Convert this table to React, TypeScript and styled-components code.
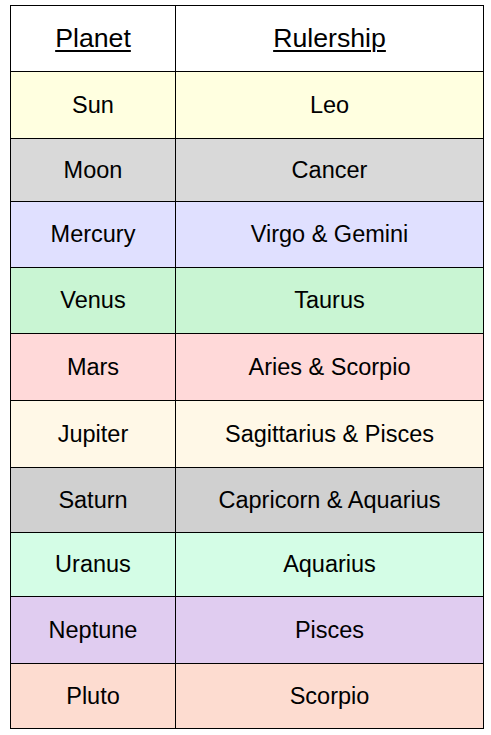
import React from "react";
import styled, { createGlobalStyle } from "styled-components";

const Global = createGlobalStyle`
  html, body { margin: 0; padding: 0; background: #ffffff; }
  body { font-family: "Liberation Sans", Arial, sans-serif; color: #000; }
`;

const Table = styled.div`
  margin: 5px 0 0 10px;
  width: 474px;
  border-top: 1px solid #000;
  border-left: 1px solid #000;
  box-sizing: border-box;
`;

const Row = styled.div<{ $bg: string; $h: number }>`
  display: grid;
  grid-template-columns: 165px 308px;
  height: ${(p) => p.$h}px;
  background: ${(p) => p.$bg};
`;

const Cell = styled.div<{ $head?: boolean }>`
  display: flex;
  align-items: center;
  justify-content: center;
  border-right: 1px solid #000;
  border-bottom: 1px solid #000;
  box-sizing: border-box;
  font-size: ${(p) => (p.$head ? 26.7 : 23.5)}px;
  text-decoration: ${(p) => (p.$head ? "underline" : "none")};
  text-underline-offset: 3px;
  text-decoration-thickness: 2px;
`;

const rows: { planet: string; rule: string; bg: string; h: number }[] = [
  { planet: "Sun", rule: "Leo", bg: "#ffffe0", h: 67 },
  { planet: "Moon", rule: "Cancer", bg: "#d9d9d9", h: 63 },
  { planet: "Mercury", rule: "Virgo & Gemini", bg: "#e0e0ff", h: 66 },
  { planet: "Venus", rule: "Taurus", bg: "#c9f5d3", h: 66 },
  { planet: "Mars", rule: "Aries & Scorpio", bg: "#ffd9d9", h: 67 },
  { planet: "Jupiter", rule: "Sagittarius & Pisces", bg: "#fff8e7", h: 67 },
  { planet: "Saturn", rule: "Capricorn & Aquarius", bg: "#d0d0d0", h: 65 },
  { planet: "Uranus", rule: "Aquarius", bg: "#d4fde6", h: 64 },
  { planet: "Neptune", rule: "Pisces", bg: "#e0ccf0", h: 67 },
  { planet: "Pluto", rule: "Scorpio", bg: "#fddcd0", h: 65 },
];

export default function App() {
  return (
    <>
      <Global />
      <Table>
        <Row $bg="#ffffff" $h={66}>
          <Cell $head>Planet</Cell>
          <Cell $head>Rulership</Cell>
        </Row>
        {rows.map((r) => (
          <Row key={r.planet} $bg={r.bg} $h={r.h}>
            <Cell>{r.planet}</Cell>
            <Cell>{r.rule}</Cell>
          </Row>
        ))}
      </Table>
    </>
  );
}
